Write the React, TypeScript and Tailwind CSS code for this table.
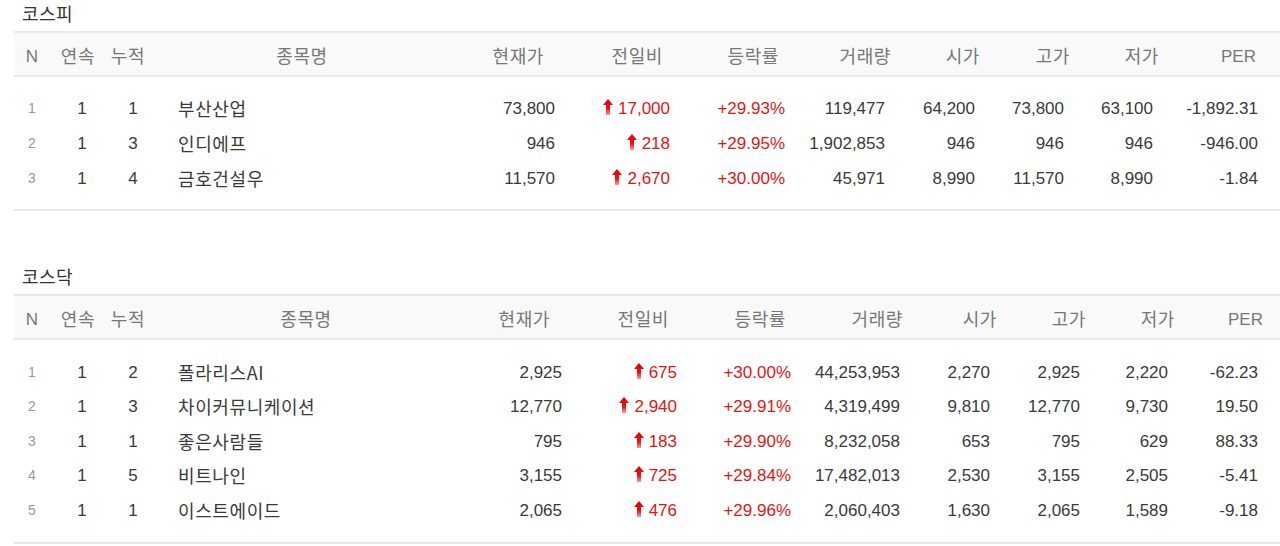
import React from "react";

type Row = {
  n: number;
  streak: number;
  total: number;
  name: string;
  price: string;
  diff: string;
  rate: string;
  volume: string;
  open: string;
  high: string;
  low: string;
  per: string;
};

type Layout = {
  grid: string;
  headPr: string[];
  dataPr: string[];
  bodyPad: string;
  rowH: string;
};

const kospi: Row[] = [
  { n: 1, streak: 1, total: 1, name: "부산산업", price: "73,800", diff: "17,000", rate: "+29.93%", volume: "119,477", open: "64,200", high: "73,800", low: "63,100", per: "-1,892.31" },
  { n: 2, streak: 1, total: 3, name: "인디에프", price: "946", diff: "218", rate: "+29.95%", volume: "1,902,853", open: "946", high: "946", low: "946", per: "-946.00" },
  { n: 3, streak: 1, total: 4, name: "금호건설우", price: "11,570", diff: "2,670", rate: "+30.00%", volume: "45,971", open: "8,990", high: "11,570", low: "8,990", per: "-1.84" },
];

const kosdaq: Row[] = [
  { n: 1, streak: 1, total: 2, name: "폴라리스AI", price: "2,925", diff: "675", rate: "+30.00%", volume: "44,253,953", open: "2,270", high: "2,925", low: "2,220", per: "-62.23" },
  { n: 2, streak: 1, total: 3, name: "차이커뮤니케이션", price: "12,770", diff: "2,940", rate: "+29.91%", volume: "4,319,499", open: "9,810", high: "12,770", low: "9,730", per: "19.50" },
  { n: 3, streak: 1, total: 1, name: "좋은사람들", price: "795", diff: "183", rate: "+29.90%", volume: "8,232,058", open: "653", high: "795", low: "629", per: "88.33" },
  { n: 4, streak: 1, total: 5, name: "비트나인", price: "3,155", diff: "725", rate: "+29.84%", volume: "17,482,013", open: "2,530", high: "3,155", low: "2,505", per: "-5.41" },
  { n: 5, streak: 1, total: 1, name: "이스트에이드", price: "2,065", diff: "476", rate: "+29.96%", volume: "2,060,403", open: "1,630", high: "2,065", low: "1,589", per: "-9.18" },
];

const kospiLayout: Layout = {
  grid: "grid grid-cols-[36px_56px_44px_304px_120px_116px_110px_100px_90px_90px_90px_110px]",
  headPr: ["pr-[30px]", "pr-[27px]", "pr-[21px]", "pr-[9px]", "pr-[10px]", "pr-[10px]", "pr-[11px]", "pr-[24px]"],
  dataPr: ["pr-[19px]", "pr-[20px]", "pr-[15px]", "pr-[15px]", "pr-[15px]", "pr-[16px]", "pr-[17px]", "pr-[22px]"],
  bodyPad: "pt-[14px] pb-[13px]",
  rowH: "h-[35px]",
};

const kosdaqLayout: Layout = {
  grid: "grid grid-cols-[36px_56px_44px_312px_118px_115px_110px_110px_90px_90px_90px_95px]",
  headPr: ["pr-[30px]", "pr-[26px]", "pr-[19px]", "pr-[12px]", "pr-[8px]", "pr-[9px]", "pr-[10px]", "pr-[17px]"],
  dataPr: ["pr-[18px]", "pr-[18px]", "pr-[14px]", "pr-[15px]", "pr-[15px]", "pr-[15px]", "pr-[17px]", "pr-[22px]"],
  bodyPad: "pt-[15px] pb-[14px]",
  rowH: "h-[34.5px]",
};

const numHeads = ["현재가", "전일비", "등락률", "거래량", "시가", "고가", "저가", "PER"];

const kr = "font-['Noto_Sans_CJK_KR',sans-serif] text-[18px] tracking-[0.6px]";
const num = "font-['Liberation_Sans','Noto_Sans_CJK_KR',sans-serif] text-[17px]";

function UpArrow() {
  return (
    <svg width="10" height="16" viewBox="0 0 10 16" className="mr-[5px] mb-[3px]">
      <defs>
        <linearGradient id="upg" x1="0" y1="0" x2="0" y2="1">
          <stop offset="0" stopColor="#e60000" />
          <stop offset="0.6" stopColor="#f01010" />
          <stop offset="1" stopColor="#ff9a9a" />
        </linearGradient>
      </defs>
      <path d="M5 0 L10 6 L7 6 L7 16 L3 16 L3 6 L0 6 Z" fill="url(#upg)" />
    </svg>
  );
}

function StockTable({ title, rows, layout }: { title: string; rows: Row[]; layout: Layout }) {
  return (
    <section>
      <div className="h-[31px] flex items-center pl-[22px] pb-[4px]">
        <h2 className="font-['Noto_Sans_CJK_KR',sans-serif] text-[18px] tracking-[0.5px] text-[#333]">{title}</h2>
      </div>
      <div className="ml-[14px] w-[1266px] border-t-2 border-b-2 border-[#e8e8e8]">
        <div className={`${layout.grid} h-[44px] pt-[2px] items-center bg-[#f9f9f9] border-b-2 border-[#e8e8e8] text-[#777]`}>
          <div className={`${num} text-center pt-[3px]`}>N</div>
          <div className={`${kr} text-center`}>연속</div>
          <div className={`${kr} text-center`}>누적</div>
          <div className={`${kr} text-center`}>종목명</div>
          {numHeads.map((h, i) => (
            <div key={h} className={`${h === "PER" ? `${num} pt-[3px]` : kr} text-right ${layout.headPr[i]}`}>
              {h}
            </div>
          ))}
        </div>
        <div className={layout.bodyPad}>
          {rows.map((r) => {
            const vals = [r.price, r.diff, r.rate, r.volume, r.open, r.high, r.low, r.per];
            return (
              <div key={r.n} className={`${layout.grid} ${layout.rowH} items-center text-[#3a3a3a]`}>
                <div className="font-['Liberation_Sans',sans-serif] text-[14px] text-[#999] text-center">{r.n}</div>
                <div className={`${num} text-center pl-[8px]`}>{r.streak}</div>
                <div className={`${num} text-center pl-[10px]`}>{r.total}</div>
                <div className={`${kr} pl-[28px]`}>{r.name}</div>
                {vals.map((v, i) => (
                  <div
                    key={i}
                    className={`${num} flex items-center justify-end ${layout.dataPr[i]} ${i === 1 || i === 2 ? "text-[#e51414]" : ""}`}
                  >
                    {i === 1 && <UpArrow />}
                    {v}
                  </div>
                ))}
              </div>
            );
          })}
        </div>
      </div>
    </section>
  );
}

export default function App() {
  return (
    <div className="w-[1280px] h-[546px] bg-white overflow-hidden">
      <div className="flex flex-col gap-[52px]">
        <StockTable title="코스피" rows={kospi} layout={kospiLayout} />
        <StockTable title="코스닥" rows={kosdaq} layout={kosdaqLayout} />
      </div>
    </div>
  );
}
